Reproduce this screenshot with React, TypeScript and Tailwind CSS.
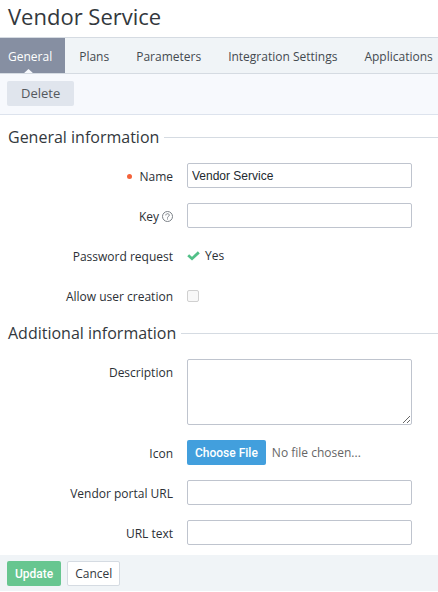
import { useRef, type ReactNode } from 'react'

const tabs = ['General', 'Plans', 'Parameters', 'Integration Settings', 'Applications']

const inputClass =
  'block w-full rounded-[2px] border border-[#bfc4ce] bg-white px-1 font-["Liberation_Sans",sans-serif] text-xs text-[#22292f] outline-none'

function Tabs() {
  return (
    <nav className="flex overflow-hidden border-y border-[#d5dbe2] bg-[#f0f4f7]">
      {tabs.map((tab, i) => (
        <a
          key={tab}
          href="#"
          className={`relative -mb-px flex h-9 shrink-0 items-center pt-[2px] pr-[13px] whitespace-nowrap ${
            i === 0 ? 'bg-[#868fa2] pl-2 text-white' : 'pl-[14px] text-[#444a50]'
          }`}
        >
          {tab}
          {i === 0 && (
            <svg className="absolute bottom-0 left-[23px]" width="11" height="5" viewBox="0 0 11 5" aria-hidden="true">
              <path d="M0 5 5.5 0 11 5Z" fill="#f7f9fd" />
            </svg>
          )}
        </a>
      ))}
    </nav>
  )
}

function Section({ title, children }: { title: string; children: ReactNode }) {
  return (
    <section>
      <div className="mb-[14px] flex items-center gap-[5px]">
        <h2 className="pl-2 text-base leading-6 text-[#33383d]">{title}</h2>
        <span className="h-px flex-1 bg-[#d5dbe2]" />
      </div>
      <div className="flex flex-col gap-[15px]">{children}</div>
    </section>
  )
}

function Row({
  label,
  htmlFor,
  required,
  help,
  children,
}: {
  label: string
  htmlFor?: string
  required?: boolean
  help?: boolean
  children: ReactNode
}) {
  return (
    <div className="flex pr-[26px]">
      <div className="mr-[14px] -mb-[2px] flex h-[27px] w-[173px] shrink-0 items-center justify-end">
        {required && <span className="mr-[7px] size-[5px] rounded-full bg-[#f4623a]" />}
        <label htmlFor={htmlFor}>{label}</label>
        {help && (
          <svg className="ml-[3px]" width="11" height="11" viewBox="0 0 11 11" fill="none" stroke="#7b8087" aria-hidden="true">
            <circle cx="5.5" cy="5.5" r="5" />
            <path d="M3.8 4.4c0-2.3 3.5-2.2 3.5-.1 0 1.1-1.8 1.1-1.8 2.4" />
            <path d="M5.5 7.4v1.1" />
          </svg>
        )}
      </div>
      <div className="flex min-w-0 flex-1 items-center">{children}</div>
    </div>
  )
}

export default function App() {
  const fileRef = useRef<HTMLInputElement>(null)

  return (
    <div className='bg-white font-["Open_Sans",sans-serif] text-xs text-[#2b3036]'>
      <h1 className="h-[37px] pl-2 text-[22px] leading-8 text-[#33383d]">Vendor Service</h1>
      <Tabs />
      <div className="border-b border-[#dde3ed] bg-[#f7f9fd] px-[7px] pt-[7px] pb-2">
        <button type="button" className="h-[25px] rounded-[2px] bg-[#e0e5ed] px-[14px] text-[13px] text-[#55595e]">
          Delete
        </button>
      </div>

      <form onSubmit={(e) => e.preventDefault()}>
        <div className="flex flex-col gap-[13px] pt-[10px] pb-[10px]">
          <Section title="General information">
            <Row label="Name" htmlFor="name" required>
              <input id="name" type="text" defaultValue="Vendor Service" className={`${inputClass} h-[25px]`} />
            </Row>
            <Row label="Key" htmlFor="key" help>
              <input id="key" type="text" className={`${inputClass} h-[25px]`} />
            </Row>
            <Row label="Password request">
              <svg className="mr-[5px]" width="13" height="10" viewBox="0 0 13 10" fill="none" aria-hidden="true">
                <path d="M1.2 4.3 5 7.7 11.8 1.4" stroke="#52c088" strokeWidth="2.8" />
              </svg>
              Yes
            </Row>
            <Row label="Allow user creation" htmlFor="allow">
              <input
                id="allow"
                type="checkbox"
                disabled
                className="size-3 appearance-none rounded-[2px] border border-[#d0d0d0] bg-[#f8f8f8]"
              />
            </Row>
          </Section>

          <Section title="Additional information">
            <Row label="Description" htmlFor="description">
              <textarea id="description" className={`${inputClass} h-[66px] resize`} />
            </Row>
            <Row label="Icon" htmlFor="choose">
              <button
                id="choose"
                type="button"
                onClick={() => fileRef.current?.click()}
                className='h-[25px] rounded-[2px] bg-[#429fdd] px-2 font-["Roboto",sans-serif] font-medium whitespace-nowrap text-white'
              >
                Choose File
              </button>
              <input ref={fileRef} type="file" hidden />
              <span className="ml-[6px] text-[#666]">No file chosen...</span>
            </Row>
            <Row label="Vendor portal URL" htmlFor="portal">
              <input id="portal" type="text" className={`${inputClass} h-[25px]`} />
            </Row>
            <Row label="URL text" htmlFor="urltext">
              <input id="urltext" type="text" className={`${inputClass} h-[25px]`} />
            </Row>
          </Section>
        </div>

        <div className="flex gap-[6px] bg-[#f0f4f7] px-[7px] pt-[6px] pb-[5px]">
          <button
            type="submit"
            className='h-[25px] rounded-[2px] bg-[#67c690] px-2 font-["Roboto",sans-serif] font-medium text-white'
          >
            Update
          </button>
          <button type="button" className="h-[25px] rounded-[2px] border border-[#d5dbe2] bg-white px-[7px] text-[#33383d]">
            Cancel
          </button>
        </div>
      </form>
    </div>
  )
}
